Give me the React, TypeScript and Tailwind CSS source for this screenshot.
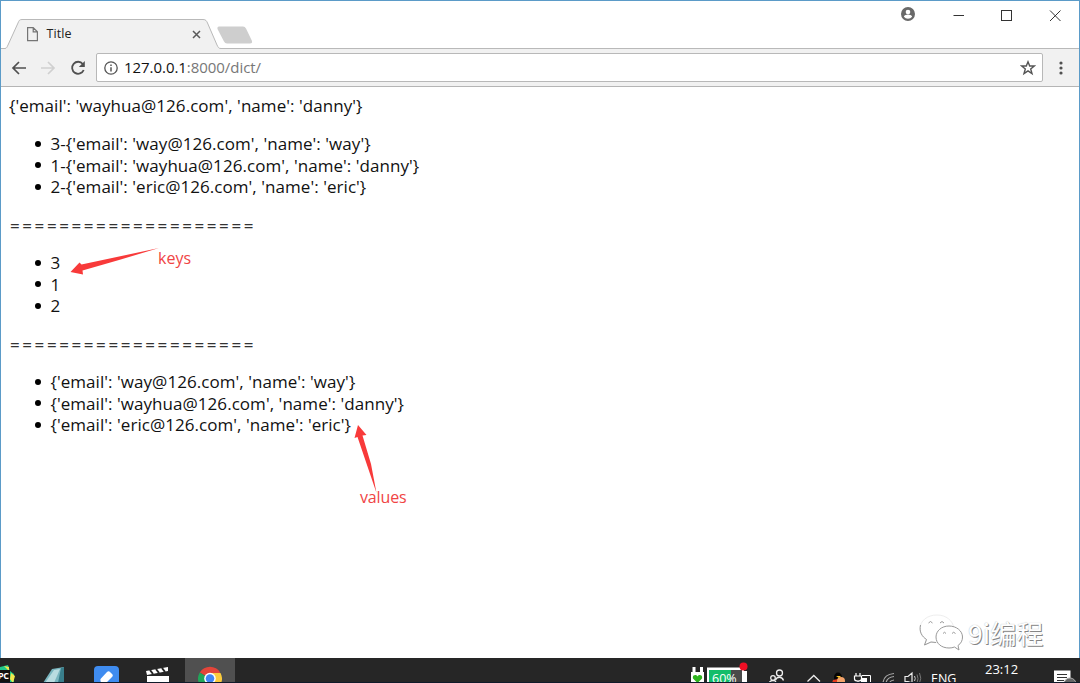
import type { ReactNode } from 'react';

const ENTRIES = [
  { key: '3', value: "{'email': 'way@126.com', 'name': 'way'}" },
  { key: '1', value: "{'email': 'wayhua@126.com', 'name': 'danny'}" },
  { key: '2', value: "{'email': 'eric@126.com', 'name': 'eric'}" },
];

const DIVIDER = '====================';

// Tab strip with the window controls on the right
function TabStrip() {
  return (
    <div className="relative flex h-[48px] shrink-0 items-end justify-between bg-white">
      <div className="absolute inset-x-0 bottom-0 h-px bg-[#b9b9b9]" />
      <div className="relative flex h-[30px] w-[213px] items-center pl-[18.500px] ml-[4px]">
        <svg className="absolute left-0 top-0" width="216" height="30" viewBox="0 0 216 30">
          <path d="M0 30V29.500C2 29 2 28 3 26L13 4C14 1.500 14.500 .5 17 .5H198C201 .5 201.500 2 202.500 4L212 26C213 28 213.500 29.500 216 29.500V30Z" fill="#f1f1f1" />
          <path d="M0 29.500C2 29 2 28 3 26L13 4C14 1.500 14.500 .5 17 .5H198C201 .5 201.500 2 202.500 4L212 26C213 28 213.500 29.500 216 29.500" fill="none" stroke="#b9b9b9" />
        </svg>
        <svg className="relative" width="15" height="16" viewBox="0 0 15 16" fill="none" stroke="#757575" strokeWidth="1.2">
          <path d="M3.600 1.600H9.200L13.400 5.800V14.600H3.600ZM9.200 1.600V5.800H13.400" />
        </svg>
        <span className="relative ml-[8px] text-[12.500px] tracking-[0.100px] leading-none text-[#222]">Title</span>
        <svg className="absolute left-[187px] top-[11px]" width="9" height="9" viewBox="0 0 9 9" stroke="#5a5a5a" strokeWidth="1.500">
          <path d="M1 1L8 8M8 1L1 8" />
        </svg>
      </div>
      <svg className="absolute left-[215px] top-[23px]" width="38" height="21" viewBox="0 0 38 21">
        <path d="M3 2.500H27Q29 2.500 30 4.500L36 17Q36.500 19.500 34 19.500H11Q9 19.500 8 17.500L1.500 5Q1 2.500 3 2.500Z" fill="#cecece" />
      </svg>
      <div className="flex h-full items-start pt-[5px]">
        <svg width="16" height="16" viewBox="0 0 24 24" className="mr-[36px]" fill="#696969">
          <path d="M12 1.500a10.500 10.500 0 1 0 0 21 10.500 10.500 0 0 0 0-21Zm0 4a3.500 3.500 0 1 1 0 7 3.500 3.500 0 0 1 0-7Zm0 13.500a8 8 0 0 1-6.200-3c.1-2.100 4.200-3.100 6.200-3.100s6.100 1 6.200 3.100a8 8 0 0 1-6.200 3Z" />
        </svg>
        <svg width="14" height="16" viewBox="0 0 14 16" className="mr-[34px]" stroke="#333">
          <path d="M1.500 9.500H12" />
        </svg>
        <svg width="14" height="16" viewBox="0 0 14 16" className="mr-[35px]" fill="none" stroke="#333">
          <rect x="1.500" y="4.500" width="10" height="10" />
        </svg>
        <svg width="14" height="16" viewBox="0 0 14 16" className="mr-[16px]" stroke="#333">
          <path d="M1 4.500L11.500 15M11.500 4.500L1 15" />
        </svg>
      </div>
    </div>
  );
}

function Toolbar() {
  return (
    <div className="flex h-[38px] shrink-0 items-center border-b border-[#b5b5b5] bg-[#f1f1f1] pl-[10px] pr-[8px]">
      <svg width="16" height="16" viewBox="0 0 16 16" fill="none" stroke="#505050" strokeWidth="1.700">
        <path d="M15 8H2M8 2L2 8L8 14" />
      </svg>
      <svg className="ml-[13px]" width="16" height="16" viewBox="0 0 16 16" fill="none" stroke="#d0d0d0" strokeWidth="1.700">
        <path d="M1 8H14M8 2L14 8L8 14" />
      </svg>
      <svg className="ml-[13px]" width="18" height="18" viewBox="0 0 18 18" fill="none" stroke="#505050" strokeWidth="1.800">
        <path d="M13.800 5A6 6 0 1 0 14.700 11" />
        <path d="M15.800 2V8H9.800Z" fill="#505050" stroke="none" />
      </svg>
      <div className="ml-[9px] flex h-[29px] flex-1 items-center rounded-[2px] border border-[#b8b8b8] bg-white pl-[7px] pr-[6px]">
        <svg width="14" height="14" viewBox="0 0 14 14" fill="none" stroke="#555" strokeWidth="1.300">
          <circle cx="7" cy="7" r="6.200" />
          <path d="M7 6.200V10.500M7 3.500V5" strokeWidth="1.500" />
        </svg>
        <span className="ml-[6px] text-[15px] tracking-[-0.050px] leading-none text-[#111]">
          127.0.0.1<span className="text-[#777]">:8000/dict/</span>
        </span>
        <svg className="ml-auto" width="16" height="16" viewBox="0 0 16 16" fill="none" stroke="#555" strokeWidth="1.400">
          <path d="M8 1.800L9.700 6H14.300L10.700 8.900L12 13.500L8 10.800L4 13.500L5.300 8.900L1.700 6H6.300Z" />
        </svg>
      </div>
      <svg className="ml-[16px]" width="4" height="16" viewBox="0 0 4 16" fill="#505050">
        <circle cx="2" cy="3" r="1.600" />
        <circle cx="2" cy="8" r="1.600" />
        <circle cx="2" cy="13" r="1.600" />
      </svg>
      <div className="w-[8px]" />
    </div>
  );
}

function DictList({ items }: { items: string[] }) {
  return (
    <ul className="mb-[17.500px] mt-[15.500px]">
      {items.map((item) => (
        <li key={item} className="flex items-center">
          <span className="ml-[25.500px] mr-[10px] size-[6px] rounded-full bg-black" />
          {item}
        </li>
      ))}
    </ul>
  );
}

// Red hand-placed notes lying over the page
function Annotations() {
  return (
    <>
      <svg className="absolute left-[68px] top-[159px]" width="92" height="30" viewBox="0 0 92 30" fill="#f83a3a">
        <path d="M90 2L12.500 18.500L10.500 16.500L1.500 26L14 28.500L13.500 24.500L50 14Z" />
      </svg>
      <span className="absolute left-[157px] top-[160px] text-[16px] leading-[22px] text-[#f04444]">keys</span>
      <svg className="absolute left-[352px] top-[337px]" width="26" height="72" viewBox="0 0 26 72" fill="#f83a3a">
        <path d="M5 1L1.500 14L4.500 13L23.500 69L18 40L9.500 11.500L13.500 11Z" />
      </svg>
      <span className="absolute left-[359px] top-[399px] text-[16px] tracking-[-0.150px] leading-[22px] text-[#f04444]">values</span>
    </>
  );
}

function Watermark() {
  return (
    <div className="absolute left-[918px] top-[527px] flex items-center">
      <svg width="45" height="38" viewBox="0 0 45 38" fill="#fff" stroke="#999" strokeWidth="1">
        <path d="M18 1C8 1 1 7 1 15C1 19.500 4 23 7.500 25.500L5.500 31L12 28Q15 29 19 28.500C29 28 35 22 35 14.500C34 6.500 27 1 18 1Z" stroke="#eee" />
        <path d="M1.500 11C0 18 3 22.500 7.500 25.500L5.500 31L12 28L17 28.500" fill="none" />
        <path d="M30 12C22.500 12 17 17 17 23C17 29.500 22.500 34 30 34Q33 34 35.500 33L40 36L39 31.500C42 29.500 43.500 26.500 43.500 23C43.500 17 37.500 12 30 12Z" />
        <path d="M9.500 9Q11.500 6 13.500 9M21 9Q23 6 25 9M24 19.500Q25.500 17 27 19.500M33 19.500Q34.500 17 36.500 19.500" />
      </svg>
      <span className="ml-[4px] font-['Noto_Sans_CJK_SC',sans-serif] text-[26.500px] leading-[38px] text-white [text-shadow:1px_1px_0_#858585,0_0_1px_#aaa]">
        9i编程
      </span>
    </div>
  );
}

function Page() {
  return (
    <div className="relative flex-1 overflow-hidden whitespace-pre bg-white pl-[8px] pt-[8px] text-[17px] tracking-[0.050px] leading-[21.500px] text-[#111]">
      <p className="pb-px">{ENTRIES[1].value}</p>
      <DictList items={ENTRIES.map((e) => `${e.key}-${e.value}`)} />
      <p className="pl-px tracking-[2.580px] text-[#333]">{DIVIDER}</p>
      <DictList items={ENTRIES.map((e) => e.key)} />
      <p className="pl-px tracking-[2.580px] text-[#333]">{DIVIDER}</p>
      <DictList items={ENTRIES.map((e) => e.value)} />
      <Annotations />
      <Watermark />
    </div>
  );
}

function Icon({ width, className = '', children }: { width: number; className?: string; children: ReactNode }) {
  return (
    <svg className={`shrink-0 ${className}`} width={width} height="25" viewBox={`0 0 ${width} 25`} fill="none">
      {children}
    </svg>
  );
}

// Bottom bar, cut off by the lower edge of the screen
function Taskbar() {
  return (
    <div className="flex h-[25px] shrink-0 items-start overflow-hidden border-b border-[#101a2a] bg-[#262626] text-white">
      <div className="relative h-[25px] w-[16px]">
        <Icon width={16}>
          <path d="M0 9L8 7L10 13L14 16V25H0Z" fill="#20c98a" />
          <path d="M4 8L9 9L9 13ZM11 15L15 18L13 25L10 21Z" fill="#f1e84c" />
          <path d="M0 12H10V24H0Z" fill="#111" />
        </Icon>
        <span className="absolute left-[-2px] top-[13px] text-[9px] font-bold leading-[10px] tracking-[-0.500px]">PC</span>
      </div>
      <Icon width={24} className="ml-[26px]">
        <path d="M10 11L22 9V25H1Z" fill="#79b5be" />
        <path d="M12 12L18 11L12 25H3Z" fill="#b9dce0" />
        <path d="M19 10L22 9V25H16Z" fill="#397e8b" />
      </Icon>
      <Icon width={26} className="ml-[27px]">
        <rect x="1" y="8" width="25" height="25" rx="4" fill="#3f8cf0" />
        <path d="M7.500 21L14 14Q16 12 18 15Q21 17 19 19L13 25H9Q7 24 7.500 21Z" fill="#fff" />
      </Icon>
      <Icon width={24} className="ml-[27px]">
        <path d="M0 13L22 9V13L1 17Z" fill="#fff" />
        <path d="M4 12L7 16M10 11L13 15M16 10L19 14" stroke="#262626" strokeWidth="2" />
        <rect x="1" y="18" width="22" height="8" fill="#fff" />
      </Icon>
      <div className="ml-[15px] flex h-[25px] w-[50px] justify-center bg-[#505050]">
        <Icon width={24}>
          <path d="M12 20.500L1.800 14.500A11.800 11.800 0 0 1 22.200 14.500Z" fill="#e3453a" />
          <path d="M1.800 14.500A11.800 11.800 0 0 0 2 27L12 21Z" fill="#21a65a" />
          <path d="M12 15H22.500A11.800 11.800 0 0 1 22 27L12 21Z" fill="#fbcb3c" />
          <circle cx="12" cy="20.500" r="5.800" fill="#fff" />
          <circle cx="12" cy="20.500" r="4.300" fill="#4285f4" />
        </Icon>
      </div>

      {/* System tray */}
      <Icon width={14} className="ml-[456px]">
        <path d="M3 9V15M10.500 9V15" stroke="#fff" strokeWidth="3" />
        <path d="M0 14H13V25H0Z" fill="#fff" />
        <path d="M6.500 25L2 20.500C1 17 5 16 6.500 18.500C8 16 12 17 11 20.500Z" fill="#2fb51e" />
      </Icon>
      <div className="relative ml-[1px] h-[25px] w-[42px]">
        <Icon width={42}>
          <path d="M1 9.500H38V25H1Z" fill="#fff" />
          <path d="M3 12H36V25H3Z" fill="#4a4a4a" />
          <path d="M3 12H25V25H3Z" fill="#13bd69" />
          <path d="M38 13H41V25H38Z" fill="#fff" />
          <circle cx="37.500" cy="8.500" r="4" fill="#f00f24" />
        </Icon>
        <span className="absolute left-[6px] top-[14px] text-[12.500px] leading-[14px]">60%</span>
      </div>
      <Icon width={16} className="ml-[21px]">
        <g stroke="#eee" strokeWidth="1.300">
          <circle cx="10.500" cy="15" r="3" />
          <circle cx="4" cy="20" r="2.300" />
          <path d="M6.500 22C8 18.500 13 18 14.500 22.500M0 25Q1 22.500 4 22.500Q7 22.500 7 25" />
        </g>
      </Icon>
      <Icon width={16} className="ml-[21px]">
        <path d="M1.500 23.500L7.800 17.500L14 23.500" stroke="#eee" strokeWidth="1.300" />
      </Icon>
      <Icon width={16} className="ml-[9px]">
        <ellipse cx="7" cy="19.500" rx="4" ry="5" fill="#050505" />
        <path d="M2 22L12 20V22L4 25H1Z" fill="#e43a1d" />
        <circle cx="10" cy="23" r="4" fill="#f4a36a" />
        <path d="M5 18H10L8 20Z" fill="#ffc629" />
      </Icon>
      <Icon width={20} className="ml-[6px]">
        <path d="M3 15V18M7 15V18M1.500 18H8.500V21Q8.500 23 5 23Q1.500 23 1.500 21ZM5 23V25" stroke="#fff" strokeWidth="1.200" />
        <path d="M9 17.500H17.500V25" stroke="#fff" />
        <path d="M8 20H14V25H8Z" fill="#fff" />
      </Icon>
      <Icon width={16} className="ml-[9px]">
        <g stroke="#aaa" strokeWidth="1.200">
          <path d="M1 25C1.500 19 6 16 12 15.500M4 25C4.500 21.500 8 19 12 18.500M7.500 25Q8 22.500 12 22" />
        </g>
      </Icon>
      <Icon width={20} className="ml-[6px]">
        <path d="M1 18.500H4L8 15V25L4 23.500H1Z" stroke="#eee" strokeWidth="1.200" />
        <path d="M10.500 18Q12 20.500 10.500 23" stroke="#ccc" />
        <path d="M13 16.500Q15 20.500 13 25M15.500 15Q18 20.500 15.500 25" stroke="#777" />
      </Icon>
      <span className="ml-[7px] mt-[13px] w-[29px] text-[12.500px] leading-[16px]">ENG</span>
      <span className="ml-[25px] mt-[3px] w-[39px] text-[13px] leading-[16px]">23:12</span>
      <Icon width={26} className="ml-[29px]">
        <path d="M1 12.500H17.500V25H1Z" fill="#fff" />
        <path d="M4 16.500H14M4 19.500H14M4 22.500H11" stroke="#333" />
        <circle cx="17" cy="26" r="6" fill="#666" stroke="#aaa" />
      </Icon>
    </div>
  );
}

export default function App() {
  return (
    <div className="flex h-[683px] w-[1080px] flex-col overflow-hidden bg-white font-['Open_Sans','Noto_Sans_CJK_SC',sans-serif]">
      <div className="flex min-h-0 flex-1 flex-col border-x border-t border-[#5b9bc8]">
        <TabStrip />
        <Toolbar />
        <Page />
      </div>
      <Taskbar />
    </div>
  );
}
